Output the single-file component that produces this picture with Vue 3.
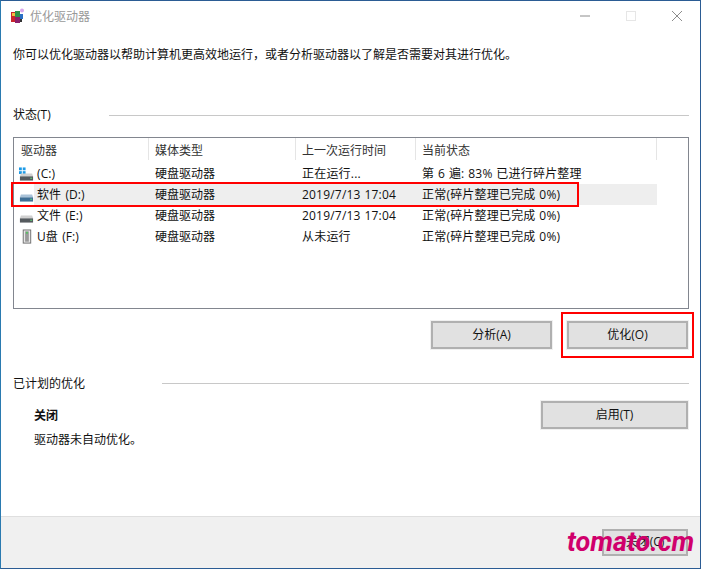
<template>
  <div class="win">
    <header class="titlebar">
      <svg class="app-icon" width="16" height="16" viewBox="0 0 16 16">
        <rect x="1" y="4" width="5" height="10" fill="#c9252d" />
        <rect x="5" y="3" width="5" height="6" fill="#2f8f4a" />
        <rect x="5" y="9" width="5" height="6" fill="#8a1f6b" />
        <rect x="10" y="6" width="3" height="5" fill="#2a6fc4" />
        <rect x="2" y="5" width="3" height="3" fill="#f0c040" />
        <circle cx="12" cy="2.5" r="2" fill="#d8a6ec" />
        <rect x="10" y="11" width="2" height="3" fill="#333" />
      </svg>
      <span class="title">优化驱动器</span>
      <div class="controls">
        <span class="ctl"><svg width="10" height="10" viewBox="0 0 10 10"><path d="M0 5h10" stroke="#8c8c8c" /></svg></span>
        <span class="ctl"><svg width="10" height="10" viewBox="0 0 10 10"><rect x=".5" y=".5" width="9" height="9" fill="none" stroke="#e6e6e6" /></svg></span>
        <span class="ctl"><svg width="10" height="10" viewBox="0 0 10 10"><path d="M0 0l10 10M10 0L0 10" stroke="#8c8c8c" /></svg></span>
      </div>
    </header>

    <main class="body">
      <p class="intro">你可以优化驱动器以帮助计算机更高效地运行，或者分析驱动器以了解是否需要对其进行优化。</p>

      <div class="group-label status-label">
        <span>状态(T)</span>
        <i class="rule"></i>
      </div>

      <div class="list">
        <div class="list-head">
          <span v-for="h in heads" :key="h" class="hcell">{{ h }}</span>
        </div>
        <div v-for="d in drives" :key="d.name" class="row" :class="{ sel: d.sel }">
          <span class="cell first">
            <span class="icon-box">
              <svg v-if="d.kind === 'usb'" width="16" height="18" viewBox="0 0 16 18">
                <rect x="4.5" y="1.5" width="8" height="14" fill="#e8e8e8" stroke="#6d6d6d" />
                <rect x="6.5" y="3" width="4" height="11" fill="#9a9a9a" />
                <rect x="7.5" y="3.5" width="2" height="2" fill="#55c060" />
              </svg>
              <svg v-else width="16" height="18" viewBox="0 0 16 18">
                <g v-if="d.kind === 'sys'" fill="#1e9ae6">
                  <rect x="0" y="2" width="3" height="3" />
                  <rect x="4" y="2" width="3" height="3" />
                  <rect x="0" y="6" width="3" height="3" />
                  <rect x="4" y="6" width="3" height="3" />
                </g>
                <path d="M2 8.500h12l1 3H1z" :fill="d.sel ? '#a9c2d8' : '#d0d0d0'" />
                <rect x="1" y="11.500" width="14" height="4.500" :fill="d.sel ? '#3f6f96' : '#555a5e'" />
                <rect x="12" y="13" width="2" height="1" fill="#5fe07a" />
              </svg>
            </span>
            <span class="name">{{ d.name }}</span>
          </span>
          <span class="cell">{{ d.media }}</span>
          <span class="cell latin">{{ d.last }}</span>
          <span class="cell latin">{{ d.state }}</span>
        </div>
      </div>

      <div class="actions">
        <button class="btn">分析(A)</button>
        <button class="btn">优化(O)</button>
      </div>

      <div class="group-label plan-label">
        <span>已计划的优化</span>
        <i class="rule"></i>
      </div>

      <div class="plan">
        <div class="plan-text">
          <strong>关闭</strong>
          <span>驱动器未自动优化。</span>
        </div>
        <button class="btn wide">启用(T)</button>
      </div>
    </main>

    <footer class="foot">
      <button class="btn close">关闭(C)</button>
    </footer>

    <!-- annotations on top of the screenshot -->
    <div class="mark mark-row"></div>
    <div class="mark mark-btn"></div>
    <div class="watermark">tomato.cm</div>
  </div>
</template>

<script setup>
const heads = ['驱动器', '媒体类型', '上一次运行时间', '当前状态']

const drives = [
  { name: '(C:)', kind: 'sys', media: '硬盘驱动器', last: '正在运行...', state: '第 6 遍: 83% 已进行碎片整理' },
  { name: '软件 (D:)', kind: 'hdd', sel: true, media: '硬盘驱动器', last: '2019/7/13 17:04', state: '正常(碎片整理已完成 0%)' },
  { name: '文件 (E:)', kind: 'hdd', media: '硬盘驱动器', last: '2019/7/13 17:04', state: '正常(碎片整理已完成 0%)' },
  { name: 'U盘 (F:)', kind: 'usb', media: '硬盘驱动器', last: '从未运行', state: '正常(碎片整理已完成 0%)' }
]
</script>

<style>
html, body { margin: 0; background: #fff; }
</style>

<style scoped>
.win {
  position: relative;
  width: 701px; height: 569px; box-sizing: border-box;
  display: flex; flex-direction: column;
  background: #fff; overflow: hidden;
  border: 1px solid #2b5c94; border-left-color: #2a7ab0;
  font: 12px/17px "Open Sans", "Noto Sans CJK SC", sans-serif;
  color: #111;
}

.titlebar {
  height: 30px; flex: none;
  display: flex; align-items: center;
  padding-left: 9px;
}
.app-icon { flex: none; }
.title { margin-left: 4px; color: #999; }
.controls { margin-left: auto; display: flex; }
.ctl { width: 46px; height: 30px; display: flex; align-items: center; justify-content: center; }

.body { flex: 1; padding: 0 11px 0 12px; display: flex; flex-direction: column; }
.intro { margin: 15px 0 0; height: 17px; }

.group-label { display: flex; align-items: center; }
.rule { flex: 1; height: 1px; background: #c8c8c8; margin-top: 2px; }
.status-label { margin-top: 43px; height: 17px; }
.status-label .rule { margin-left: 58px; }
.plan-label { margin-top: 26px; height: 17px; }
.plan-label .rule { margin-left: 77px; margin-top: 0; }

.list {
  margin-top: 14px;
  height: 172px; box-sizing: border-box;
  border: 1px solid #82868f;
}
.list-head, .row {
  display: grid; grid-template-columns: 135px 147px 120px 241px;
  width: 643px;
}
.list-head { height: 25px; }
.hcell {
  padding: 4px 0 0 6px; height: 22px; box-sizing: border-box;
  border-right: 1px solid #e5e5e5; color: #333;
  line-height: 18px;
}
.hcell:first-child { padding-left: 7px; }
.row { height: 21px; align-items: stretch; line-height: 21px; }
.row.sel { background: #eeeeee; }
.cell { padding-left: 6px; white-space: nowrap; }
.latin { letter-spacing: .2px; word-spacing: .5px; }
.first { display: flex; padding-left: 0; }
.icon-box {
  flex: none; width: 20px; height: 21px; box-sizing: border-box;
  padding-left: 5px; display: flex; align-items: center;
  background: #fff;
}
.name { margin-left: 3px; letter-spacing: .1px; word-spacing: 1px; }

.btn {
  font: inherit; color: #111;
  background: #e1e1e1; border: 2px solid #b0b0b0;
  box-sizing: border-box; padding: 0 0 2px;
  outline: 1px solid #f0f0f0;
}

.actions { margin-top: 12px; margin-right: 1px; display: flex; justify-content: flex-end; gap: 15px; }
.actions .btn { width: 121px; height: 28px; }

.plan { display: flex; justify-content: space-between; margin-top: 9px; margin-right: 1px; }
.plan-text { display: flex; flex-direction: column; gap: 7px; padding: 6px 0 0 21px; }
.plan-text strong { font-weight: 700; }
.wide { width: 147px; height: 28px; }

.foot {
  height: 52px; flex: none;
  background: #f0f0f0; border-top: 1px solid #dfdfdf;
  display: flex; justify-content: flex-end; align-items: flex-start;
  padding: 12px 12px 0 0; box-sizing: border-box;
}
.close { width: 86px; height: 27px; }

.mark { position: absolute; border: 2px solid #f00; box-sizing: border-box; pointer-events: none; }
.mark-row { left: 10px; top: 181px; width: 568px; height: 25px; }
.mark-btn { left: 560px; top: 311px; width: 133px; height: 46px; }

.watermark {
  position: absolute; left: 566px; top: 524px;
  font: italic 700 27px/34px Roboto, sans-serif;
  color: #d0006c; white-space: nowrap;
}
</style>
